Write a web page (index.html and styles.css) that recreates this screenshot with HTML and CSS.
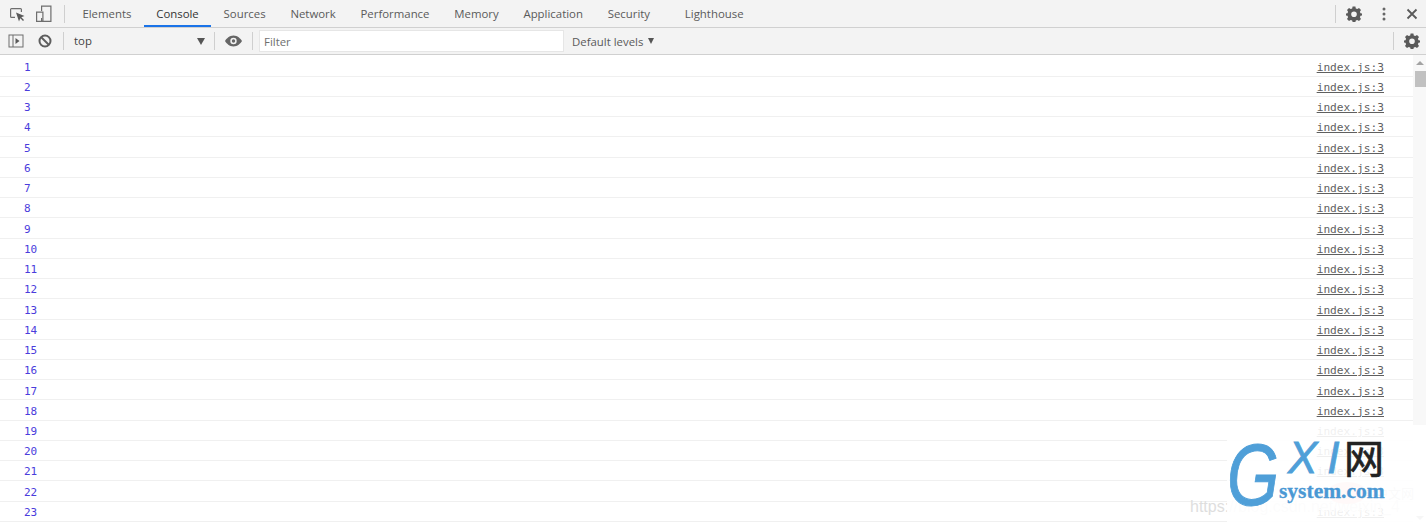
FILE: index.html
```html
<!DOCTYPE html>
<html lang="en">
<head>
<meta charset="utf-8">
<title>DevTools Console</title>
<link rel="stylesheet" href="styles.css">
</head>
<body>
<div class="devtools">
  <header class="tabbar">
    <button class="icon-btn first" aria-label="Inspect"><svg width="18" height="18" viewBox="0 0 18 18"><path d="M7 13H3.500A1.500 1.500 0 0 1 2 11.500V4.500A1.500 1.500 0 0 1 3.500 3H12.500A1.500 1.500 0 0 1 14 4.500V7H12.800V4.200H3.200V11.800H7Z" fill="#6e6e6e"/><path d="M8 7.500L16.500 11L13.300 12.300L16 15L15 16L12.300 13.300L11 16.500Z" fill="#5a5a5a"/></svg></button>
    <button class="icon-btn device" aria-label="Device"><svg width="18" height="18" viewBox="0 0 18 18"><path d="M6 0.500H16.500V17H6V13H7.200V15.800H15.300V1.700H7.200V6H6Z" fill="#6e6e6e"/><path d="M1 6.500H8.500V17H1ZM2.200 7.700V15.800H7.300V7.700Z" fill="#6e6e6e"/></svg></button>
    <span class="sep tab-sep"></span>
    <nav class="tabs">
      <span class="tab">Elements</span>
      <span class="tab active">Console</span>
      <span class="tab">Sources</span>
      <span class="tab">Network</span>
      <span class="tab">Performance</span>
      <span class="tab">Memory</span>
      <span class="tab">Application</span>
      <span class="tab">Security</span>
      <span class="tab t9">Lighthouse</span>
    </nav>
    <span class="spacer"></span>
    <span class="sep"></span>
    <button class="icon-btn gear-btn" aria-label="Settings"><svg width="16" height="16" viewBox="0 0 16 16"><path class="gear" fill-rule="evenodd" d="M6.600 0.500H9.400L9.800 2.500L11.300 3.100L13 2L15 4L13.900 5.700L14.500 7.200L16 7.600V9.400L14.500 9.800L13.900 11.300L15 13L13 15L11.300 13.900L9.800 14.500L9.400 16H6.600L6.200 14.500L4.700 13.900L3 15L1 13L2.100 11.300L1.500 9.800L0 9.400V7.600L1.500 7.200L2.100 5.700L1 4L3 2L4.700 3.100L6.200 2.500ZM8 5.500A2.800 2.800 0 1 0 8 11.100A2.800 2.800 0 1 0 8 5.500Z"/></svg></button>
    <button class="icon-btn dots" aria-label="More"><svg width="4" height="14" viewBox="0 0 4 14"><circle cx="2" cy="2" r="1.500"/><circle cx="2" cy="7" r="1.500"/><circle cx="2" cy="12" r="1.500"/></svg></button>
    <button class="icon-btn close" aria-label="Close"><svg width="12" height="12" viewBox="0 0 12 12"><path d="M1.500 1.500L10.500 10.500M10.500 1.500L1.500 10.500" stroke="#5a5a5a" stroke-width="1.800" fill="none"/></svg></button>
  </header>
  <div class="filterbar">
    <button class="icon-btn sidebar" aria-label="Sidebar"><svg width="16" height="14" viewBox="0 0 16 14"><path fill-rule="evenodd" d="M0.500 0.500H15.500V13.500H0.500ZM1.500 1.500V12.500H4.500V1.500ZM5.500 1.500V12.500H14.500V1.500Z" fill="#6e6e6e"/><path d="M7.500 4L11.500 7L7.500 10Z" fill="#5a5a5a"/></svg></button>
    <button class="icon-btn clear" aria-label="Clear"><svg width="14" height="14" viewBox="0 0 14 14"><circle cx="7" cy="7" r="5.500" fill="none" stroke="#5e5e5e" stroke-width="2"/><path d="M3 3L11 11" stroke="#5e5e5e" stroke-width="2"/></svg></button>
    <span class="sep clear-sep"></span>
    <span class="context">top</span>
    <span class="arrow ctx-arrow"></span>
    <span class="sep ctx-sep"></span>
    <button class="icon-btn eye" aria-label="Live expression"><svg width="17" height="12" viewBox="0 0 17 12"><path fill-rule="evenodd" d="M8.500 0.500C12.500 0.500 15.500 3.500 17 6C15.500 8.500 12.500 11.500 8.500 11.500C4.500 11.500 1.500 8.500 0 6C1.500 3.500 4.500 0.500 8.500 0.500ZM8.500 2.800A3.200 3.200 0 1 0 8.500 9.200A3.200 3.200 0 1 0 8.500 2.800Z" fill="#666"/><circle cx="8.500" cy="6" r="1.700" fill="#666"/></svg></button>
    <span class="sep eye-sep"></span>
    <span class="filter">Filter</span>
    <span class="levels">Default levels</span>
    <span class="arrow lv-arrow"></span>
    <span class="spacer"></span>
    <span class="sep"></span>
    <button class="icon-btn gear-btn2" aria-label="Console settings"><svg width="16" height="16" viewBox="0 0 16 16"><path class="gear" fill-rule="evenodd" d="M6.600 0.500H9.400L9.800 2.500L11.300 3.100L13 2L15 4L13.900 5.700L14.500 7.200L16 7.600V9.400L14.500 9.800L13.900 11.300L15 13L13 15L11.300 13.900L9.800 14.500L9.400 16H6.600L6.200 14.500L4.700 13.900L3 15L1 13L2.100 11.300L1.500 9.800L0 9.400V7.600L1.500 7.200L2.100 5.700L1 4L3 2L4.700 3.100L6.200 2.500ZM8 5.500A2.800 2.800 0 1 0 8 11.100A2.800 2.800 0 1 0 8 5.500Z"/></svg></button>
  </div>
  <main class="console">
    <div class="log">
      <div class="row"><span class="num">1</span><a class="src">index.js:3</a></div>
      <div class="row"><span class="num">2</span><a class="src">index.js:3</a></div>
      <div class="row"><span class="num">3</span><a class="src">index.js:3</a></div>
      <div class="row"><span class="num">4</span><a class="src">index.js:3</a></div>
      <div class="row"><span class="num">5</span><a class="src">index.js:3</a></div>
      <div class="row"><span class="num">6</span><a class="src">index.js:3</a></div>
      <div class="row"><span class="num">7</span><a class="src">index.js:3</a></div>
      <div class="row"><span class="num">8</span><a class="src">index.js:3</a></div>
      <div class="row"><span class="num">9</span><a class="src">index.js:3</a></div>
      <div class="row"><span class="num">10</span><a class="src">index.js:3</a></div>
      <div class="row"><span class="num">11</span><a class="src">index.js:3</a></div>
      <div class="row"><span class="num">12</span><a class="src">index.js:3</a></div>
      <div class="row"><span class="num">13</span><a class="src">index.js:3</a></div>
      <div class="row"><span class="num">14</span><a class="src">index.js:3</a></div>
      <div class="row"><span class="num">15</span><a class="src">index.js:3</a></div>
      <div class="row"><span class="num">16</span><a class="src">index.js:3</a></div>
      <div class="row"><span class="num">17</span><a class="src">index.js:3</a></div>
      <div class="row"><span class="num">18</span><a class="src">index.js:3</a></div>
      <div class="row"><span class="num">19</span><a class="src">index.js:3</a></div>
      <div class="row"><span class="num">20</span><a class="src">index.js:3</a></div>
      <div class="row"><span class="num">21</span><a class="src">index.js:3</a></div>
      <div class="row"><span class="num">22</span><a class="src">index.js:3</a></div>
      <div class="row"><span class="num">23</span><a class="src">index.js:3</a></div>
    </div>
    <div class="scrollbar">
      <span class="sb-up"></span>
      <span class="sb-thumb"></span>
      <span class="spacer"></span>
      <span class="sb-down"></span>
    </div>
  </main>
</div>
<span class="wm-url">https://blog.csdn.net/weixin_4</span>
<span class="wm-stamp"></span>
<span class="wm-cn">中文网</span>
<div class="watermark">
  <span class="wm-g">G</span>
  <span class="wm-xi">XI</span>
  <span class="wm-wang">网</span>
  <span class="wm-site">system.com</span>
</div>
</body>
</html>
```

FILE: styles.css
```css
* { box-sizing: border-box; }
html, body { margin: 0; height: 100%; overflow: hidden; background: #fff; }
body { position: relative; font-family: "Open Sans", "Noto Sans", sans-serif; font-size: 11.400px; color: #5a5a5a; }
button { border: 0; background: none; padding: 0; display: flex; align-items: center; justify-content: center; }
svg { display: block; }
.devtools { display: flex; flex-direction: column; height: 525px; }
.tabbar { height: 28px; flex: none; display: flex; align-items: center; background: #f3f3f3; border-bottom: 1px solid #d0d0d0; }
.filterbar { height: 27px; flex: none; display: flex; align-items: center; background: #f3f3f3; border-bottom: 1px solid #d0d0d0; }
.spacer { flex: 1; }
.sep { width: 1px; height: 18px; background: #cfcfcf; flex: none; }
.icon-btn.first { margin-left: 8px; width: 18px; }
.icon-btn.device { margin-left: 9px; width: 18px; }
.tab-sep { margin-left: 11px; }
.tabs { display: flex; height: 27px; margin-left: 5px; }
.tab { display: flex; align-items: center; padding: 0 12.400px; color: #5a5a5a; white-space: nowrap; }
.tab.active { color: #333; border-bottom: 2px solid #1a73e8; padding-top: 2px; }
.t9 { margin-left: 10px; }
.gear { fill: #5a5a5a; }
.gear-btn { margin-left: 10px; width: 16px; }
.dots { margin-left: 20px; width: 4px; }
.dots circle { fill: #666; }
.close { margin-left: 20px; margin-right: 8px; width: 12px; }
.sidebar { margin-left: 8px; width: 16px; }
.clear { margin-left: 14px; width: 14px; }
.clear-sep { margin-left: 11px; }
.context { margin: -1px 0 0 10px; color: #444; width: 123px; }
.arrow { width: 0; height: 0; border-left: 4px solid transparent; border-right: 4px solid transparent; border-top: 7px solid #555; flex: none; }
.ctx-sep { margin-left: 9px; }
.eye { margin-left: 10px; width: 17px; }
.eye-sep { margin-left: 10px; }
.filter { margin-left: 6px; width: 305px; height: 22px; background: #fff; border: 1px solid #e6e6e6; padding-left: 4px; display: flex; align-items: center; color: #6f6f6f; }
.levels { margin-left: 8px; color: #5a5a5a; }
.lv-arrow { margin-left: 5px; margin-top: -1px; border-left-width: 3.500px; border-right-width: 3.500px; border-top-width: 6px; }
.gear-btn2 { margin-left: 10px; margin-right: 6px; width: 16px; }
.console { flex: 1; min-height: 0; display: flex; overflow: hidden; background: #fff; }
.log { flex: 1; min-width: 0; padding-top: 1.500px; }
.row { height: 20.235px; display: flex; justify-content: space-between; align-items: center; padding: 2.300px 29px 0 24px; border-bottom: 1px solid #f0f0f0; font-family: "DejaVu Sans Mono", monospace; font-size: 11px; }
.num { color: #4a3cdc; }
.src { color: #5f5f5f; text-decoration: underline; font-size: 11.200px; }
.scrollbar { width: 13px; flex: none; display: flex; flex-direction: column; align-items: flex-end; background: #f8f8f8; }
.sb-up { margin: 6px 2px 0 0; width: 0; height: 0; border-left: 4px solid transparent; border-right: 4px solid transparent; border-bottom: 4px solid #a3a3a3; flex: none; }
.sb-thumb { margin-top: 6px; width: 11px; height: 16px; background: #c1c1c1; flex: none; }
.sb-down { margin: 0 2px 5px 0; width: 0; height: 0; border-left: 4px solid transparent; border-right: 4px solid transparent; border-top: 4px solid #a3a3a3; flex: none; }
.wm-url { position: absolute; left: 1190px; top: 498px; width: 235px; overflow: hidden; font-family: "Liberation Sans", sans-serif; font-size: 16px; color: #dedede; white-space: nowrap; }
.wm-stamp { position: absolute; left: 1327px; top: 482px; width: 40px; height: 22px; border-radius: 50%; background: #f7c3bd; }
.wm-cn { position: absolute; left: 1375px; top: 483px; font-family: "Noto Sans CJK SC", sans-serif; font-size: 13px; color: #c8c8c8; }
.watermark { position: absolute; left: 1227px; top: 425px; width: 199px; height: 100px; background: rgba(255,255,255,.9); }
.wm-g { position: absolute; left: 0; top: 0; transform: scaleX(.76); transform-origin: 0 0; font-family: "Liberation Sans", sans-serif; font-style: italic; font-size: 88px; line-height: 100px; color: #4f9fd8; -webkit-text-stroke: 1px #4f9fd8; }
.wm-xi { position: absolute; left: 61px; top: 8px; font-family: "Liberation Sans", sans-serif; font-style: italic; font-size: 44px; line-height: 50px; letter-spacing: 10px; color: #4f9fd8; -webkit-text-stroke: .8px #4f9fd8; }
.wm-wang { position: absolute; left: 117px; top: 6px; font-family: "Noto Sans CJK SC", sans-serif; font-size: 40px; line-height: 50px; color: #222; -webkit-text-stroke: .7px #222; }
.wm-site { position: absolute; left: 52px; top: 54px; font-family: "Liberation Serif", serif; font-weight: 700; font-size: 21.500px; line-height: 24px; color: #4a98d4; -webkit-text-stroke: .3px #4a98d4; }
```
